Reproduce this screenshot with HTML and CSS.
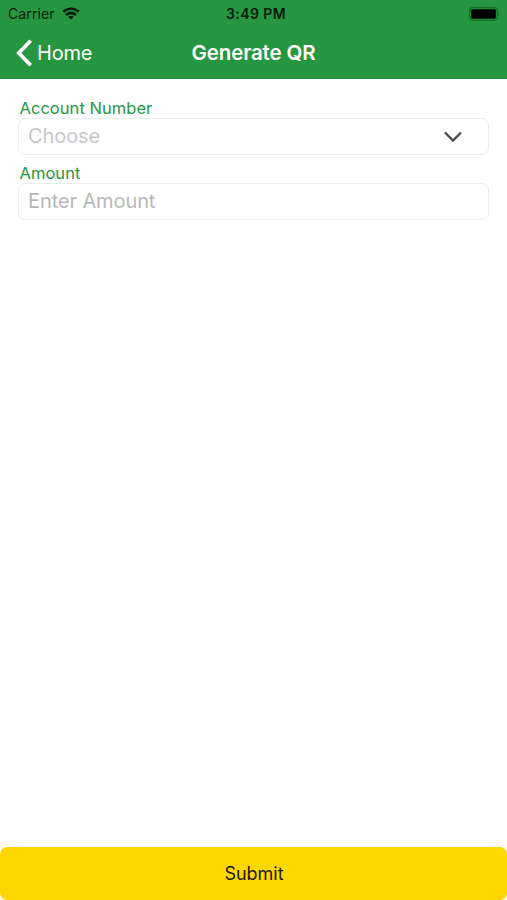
FILE: index.html
```html
<!DOCTYPE html>
<html lang="en">
<head>
<meta charset="utf-8">
<title>Generate QR</title>
<link rel="stylesheet" href="styles.css">
</head>
<body>
<div class="screen">
  <header class="header">
    <div class="status">
      <div class="carrier"><span class="carrier-name">Carrier</span>
        <svg class="wifi" width="18" height="13" viewBox="0 0 18 13" fill="none" stroke="#031c08" stroke-width="2.5"><path d="M1.2 4.7Q9-1.8 16.8 4.7"/><path d="M4 8Q9 3.8 14 8"/><path d="M9 12.6 6.3 9.9Q9 7.7 11.7 9.9Z" fill="#031c08" stroke="none"/></svg>
      </div>
      <span class="time">3:49 PM</span>
      <svg class="battery" width="32" height="14" viewBox="0 0 32 14"><rect x=".7" y=".7" width="27.6" height="12.6" rx="3.2" fill="none" stroke="#126c25" stroke-width="1.2"/><rect x="2.2" y="2.2" width="24.6" height="9.6" rx="1.4" fill="#000"/><path d="M29.5 4.8Q31.4 7 29.5 9.2Z" fill="#126c25"/></svg>
    </div>
    <nav class="nav">
      <a class="back"><svg width="17" height="28" viewBox="0 0 17 28" fill="none" stroke="#fff" stroke-width="3.7"><path d="M14.7 1.8 2.8 14 14.7 26.2"/></svg><span class="home">Home</span></a>
      <h1 class="title">Generate QR</h1>
      <span></span>
    </nav>
  </header>
  <main class="form">
    <label class="label"><span class="account">Account Number</span></label>
    <div class="field"><span class="choose">Choose</span>
      <svg class="chevron" width="20" height="12" viewBox="0 0 20 12" fill="none" stroke="#4c4c4e" stroke-width="2.4"><path d="M2 1.5 10 9.5 18 1.5"/></svg>
    </div>
    <label class="label amount-label"><span class="amount">Amount</span></label>
    <div class="field"><span class="enter">Enter Amount</span></div>
  </main>
  <button class="submit">Submit</button>
</div>
</body>
</html>
```
FILE: styles.css
```css
* { box-sizing: border-box; }
body { margin: 0; background: #fff; font-family: Inter, sans-serif; }
.screen { height: 900px; display: flex; flex-direction: column; }
.header { height: 79px; background: #269640; border-bottom: 1px solid #248c3c; color: #fff; }
.status { height: 27px; display: grid; grid-template-columns: 1fr auto 1fr; align-items: center; padding: 0 6px 0 8px; color: #031c08; }
.carrier { display: flex; align-items: center; gap: 7px; font-size: 14px; line-height: 20px; }
.carrier-name { letter-spacing: .1px; }
.time { font-size: 14px; font-weight: 600; line-height: 20px; letter-spacing: .4px; padding-left: 3px; }
.battery { justify-self: end; }
.nav { height: 51px; display: grid; grid-template-columns: 1fr auto 1fr; align-items: center; padding: 0 16px; }
.back { display: flex; align-items: center; gap: 4px; font-size: 20px; line-height: 28px; }
.home { letter-spacing: -.2px; }
.title { margin: 0; font-size: 20.5px; font-weight: 600; line-height: 28px; letter-spacing: -.15px; }
.form { flex: 1; padding: 18px 18px 0; }
.label { display: block; height: 21px; padding-left: 1.5px; font-size: 16.5px; line-height: 22px; letter-spacing: .04px; color: #269640; }
.amount-label { margin-top: 7px; }
.field { height: 37px; border: 1px solid #ececee; border-radius: 7px; padding: 0 25px 1px 9px; display: flex; align-items: center; justify-content: space-between; font-size: 20px; line-height: 28px; letter-spacing: -.1px; color: #c6c6ca; }
.chevron { margin-top: 2px; }
.enter { color: #b7b7b9; }
.submit { height: 53px; border: 0; border-radius: 7px; background: #ffd700; color: #1d1905; font: 400 18px/24px Inter, sans-serif; padding: 0 0 0 1px; }
```
